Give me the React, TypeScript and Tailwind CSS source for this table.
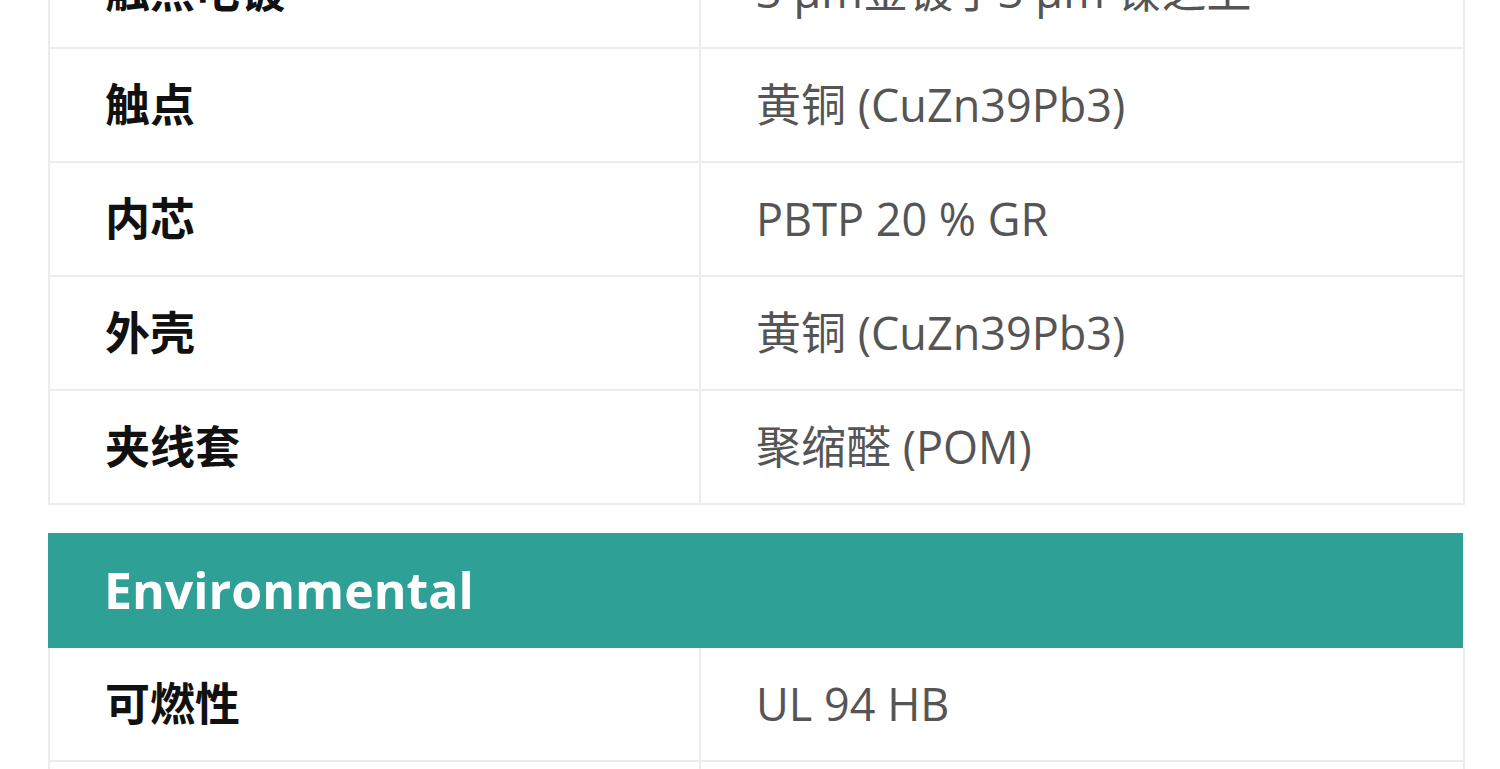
const font = { fontFamily: '"Open Sans", "Noto Sans CJK SC", sans-serif' };

type Row = { label: string; value: string };

const materials: Row[] = [
  { label: "触点电镀", value: "3 μm金镀于3 μm 镍之上" },
  { label: "触点", value: "黄铜 (CuZn39Pb3)" },
  { label: "内芯", value: "PBTP 20 % GR" },
  { label: "外壳", value: "黄铜 (CuZn39Pb3)" },
  { label: "夹线套", value: "聚缩醛 (POM)" },
];

const environmental: Row[] = [
  { label: "可燃性", value: "UL 94 HB" },
  { label: "工作温度", value: "-40 °C ... +85 °C" },
];

function SpecRow({ row }: { row: Row }) {
  return (
    <div className="grid grid-cols-[651px_1fr] h-[114px] border-b-2 border-[#ececec]">
      <div className="flex items-center pl-[55px] border-r-2 border-[#ececec] text-[45px] font-bold text-[#111]">
        {row.label}
      </div>
      <div className="flex items-center pl-[55px] text-[45px] text-[#555]">{row.value}</div>
    </div>
  );
}

export default function App() {
  return (
    <div className="w-[1500px] h-[769px] overflow-hidden bg-white" style={font}>
      <div className="-mt-[65px] ml-[48px] w-[1417px]">
        <div className="border-x-2 border-[#ececec]">
          {materials.map((r) => (
            <SpecRow key={r.label} row={r} />
          ))}
        </div>
        <div className="mt-[28px]">
          <div className="h-[115px] bg-[#2fa096] flex items-center pl-[56px] text-[50px] font-bold text-white w-[1415px]">
            Environmental
          </div>
          <div className="border-x-2 border-[#ececec]">
            {environmental.map((r) => (
              <SpecRow key={r.label} row={r} />
            ))}
          </div>
        </div>
      </div>
    </div>
  );
}
